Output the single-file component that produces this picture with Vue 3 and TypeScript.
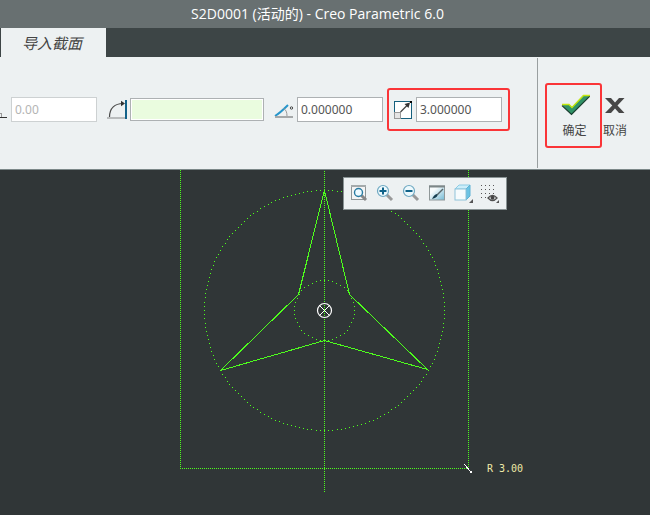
<script setup lang="ts">
import { ref } from 'vue'

interface Dot {
  x: number
  y: number
}

const distance = ref('0.00')
const reference = ref('')
const angle = ref('0.000000')
const scale = ref('3.000000')

const centre: Dot = { x: 324, y: 310 }

// Construction circles are drawn as evenly spaced single dots.
function ring(radius: number, count: number): Dot[] {
  return Array.from({ length: count }, (_, i) => {
    const a = (i * 2 * Math.PI) / count
    return {
      x: Math.round(centre.x + radius * Math.cos(a)),
      y: Math.round(centre.y + radius * Math.sin(a)),
    }
  })
}

const dots: Dot[] = [...ring(120, 180), ...ring(30, 44)]
</script>

<template>
  <div class="app">
    <header class="titlebar">S2D0001 (活动的) - Creo Parametric 6.0</header>

    <nav class="tabs">
      <button class="tab" type="button">导入截面</button>
    </nav>

    <section class="ribbon">
      <div class="fields">
        <label class="field first">
          <svg class="icon narrow" viewBox="0 0 7 19" aria-hidden="true" shape-rendering="crispEdges">
            <path d="M0 13.5H1.5V17" fill="none" stroke="#999" />
            <rect x="0" y="17" width="7" height="1" fill="#333" />
          </svg>
          <input v-model="distance" class="box" type="text" aria-label="距离" disabled />
        </label>

        <label class="field">
          <svg class="icon" viewBox="0 0 19 19" aria-hidden="true">
            <rect x="0" y="17" width="18" height="2" fill="#b9bcbd" />
            <path d="M2.500 17C2.500 8 8 3.500 16 3.500" fill="none" stroke="#4a4a4a" stroke-width="1.200" />
            <path d="M14 .8L18 3.500L14 6.200Z" fill="#333" />
            <rect x="18" y="0" width="2" height="19" fill="#12628a" />
          </svg>
          <input v-model="reference" class="box collector" type="text" aria-label="参考" />
        </label>

        <label class="field">
          <svg class="icon" viewBox="0 0 19 19" aria-hidden="true">
            <path d="M1 16Q6 13 14 5" fill="none" stroke="#2796cb" stroke-width="2" />
            <path d="M9.500 8.500Q13 10 13 16" fill="none" stroke="#999" />
            <rect x="1" y="16" width="18" height="2" fill="#a5a8a9" />
            <circle cx="17.500" cy="8" r="1.200" fill="none" stroke="#444" />
          </svg>
          <input v-model="angle" class="box" type="text" aria-label="角度" />
        </label>

        <label class="field marked">
          <svg class="icon" viewBox="0 0 19 19" aria-hidden="true">
            <rect x="1.500" y="1.500" width="17" height="17" fill="#fff" stroke="#15607e" />
            <rect x="1.500" y="12.500" width="6" height="6" fill="#e5e5e5" stroke="#999" />
            <path d="M7.500 12L16 3.500" stroke="#444" stroke-width="1.200" />
            <path d="M11.500 4L17 2.500L15.500 8Z" fill="#333" />
            <rect x="17" y="1" width="2" height="2" fill="#000" />
          </svg>
          <input v-model="scale" class="box" type="text" aria-label="比例" />
        </label>
      </div>

      <div class="actions">
        <button class="action confirm" type="button">
          <svg width="30" height="22" viewBox="-1 0 30 22" aria-hidden="true">
            <path d="M1 10.500H8L11 13L22 1.500H29L10.500 20.500Z" fill="#309367" />
            <path d="M1 11.500L10.500 20.500L29 2" fill="none" stroke="#173c2d" stroke-width="1.200" />
            <path d="M1 10.500H8L11 13.500L22.500 1.500H29" fill="none" stroke="#c5e80e" stroke-width="1.300" />
          </svg>
          <span>确定</span>
        </button>
        <button class="action cancel" type="button">
          <svg width="22" height="22" viewBox="0 0 22 22" aria-hidden="true">
            <path d="M1 4H7L11 8.500L15 4H20.500L13.500 11.500L20.500 19H15L11 14.500L7 19H1L8.300 11.500Z" fill="#474747" />
          </svg>
          <span>取消</span>
        </button>
      </div>
    </section>

    <main class="canvas">
      <svg class="sketch" viewBox="0 169 650 346" role="img" aria-label="截面草图">
        <g fill="none" stroke="#4dff1c" shape-rendering="crispEdges">
          <path d="M180.500 170V469" stroke-dasharray="1 1" />
          <path d="M468.500 170V469" stroke-dasharray="1 1" />
          <path d="M180 468.500H469" stroke-dasharray="1 1" />
          <path d="M324.500 171V492" stroke-dasharray="1 1" />
          <path d="M324.500 190.500L349.500 294.500L427.500 369.500L324.500 340.500L220.500 370.500L298.500 294.500Z" />
        </g>
        <g fill="#4dff1c" shape-rendering="crispEdges">
          <rect v-for="(dot, i) in dots" :key="i" :x="dot.x" :y="dot.y" width="1" height="1" />
        </g>
        <g fill="none" stroke="#fff">
          <circle cx="324.500" cy="310.500" r="7" stroke-width="1.200" />
          <path d="M319.500 305.500L329.500 315.500M329.500 305.500L319.500 315.500" shape-rendering="crispEdges" />
          <path d="M464 464L471 472" shape-rendering="crispEdges" />
        </g>
        <rect x="470" y="471" width="2" height="2" fill="#fff" />
        <text x="487" y="472" class="dimension">R 3.00</text>
      </svg>

      <div class="viewbar" role="toolbar" aria-label="视图">
        <button type="button" aria-label="重新调整">
          <svg viewBox="0 0 20 20">
            <rect x="2.500" y="2.500" width="14" height="14" fill="#f4f4f4" stroke="#8f9697" />
            <path d="M2 3H17" stroke="#a4aaab" stroke-width="2" />
            <path d="M12.500 12.500L17 17" stroke="#888" stroke-width="3" />
            <circle cx="9.500" cy="9.500" r="4" fill="#eefaff" stroke="#287ba1" stroke-width="1.400" />
          </svg>
        </button>
        <button type="button" aria-label="放大">
          <svg viewBox="0 0 20 20">
            <path d="M11.500 11.500L17 17" stroke="#999" stroke-width="3" />
            <circle cx="8" cy="8" r="5.500" fill="#edf9fd" stroke="#6fa9c2" stroke-width="1.200" />
            <path d="M4.500 8H11.500M8 4.500V11.500" stroke="#0f6289" stroke-width="2" />
          </svg>
        </button>
        <button type="button" aria-label="缩小">
          <svg viewBox="0 0 20 20">
            <path d="M11.500 11.500L17 17" stroke="#999" stroke-width="3" />
            <circle cx="8" cy="8" r="5.500" fill="#edf9fd" stroke="#6fa9c2" stroke-width="1.200" />
            <path d="M4.500 8H11.500" stroke="#0f6289" stroke-width="2" />
          </svg>
        </button>
        <button type="button" aria-label="重画">
          <svg viewBox="0 0 20 20">
            <defs>
              <linearGradient id="sheet" x1="0" y1="0" x2="1" y2="1">
                <stop offset=".3" stop-color="#f7fbfc" />
                <stop offset="1" stop-color="#71b9d4" />
              </linearGradient>
            </defs>
            <rect x="2.500" y="3" width="15" height="14" fill="url(#sheet)" stroke="#909899" />
            <path d="M2 3.500H18" stroke="#7d8788" stroke-width="2" />
            <path d="M16 6L10 12" stroke="#57666b" stroke-width="1.400" />
            <path d="M5 16Q7 11.500 10 11Q12 14 5 16Z" fill="#173f51" />
          </svg>
        </button>
        <button type="button" aria-label="显示样式">
          <svg viewBox="0 0 20 20">
            <path d="M2 6L6 2H17L13 6Z" fill="#cceefa" stroke="#8ccbe4" />
            <path d="M13 6L17 2V13L13 17Z" fill="#6cc3e4" stroke="#5fb2d3" />
            <rect x="2" y="6" width="11" height="11" fill="#f6fbfd" stroke="#8fc4d9" />
            <path d="M20 16V20H16Z" fill="#555" />
          </svg>
        </button>
        <button type="button" aria-label="草绘器显示过滤器">
          <svg viewBox="0 0 20 20">
            <path d="M2 2.500H17M2 6.500H17M2 10.500H17M2 14.500H9" stroke="#555" stroke-dasharray="1 3" shape-rendering="crispEdges" />
            <path d="M9 15Q13.500 10 18 15Q13.500 20 9 15Z" fill="#edf1f2" stroke="#505050" stroke-width="1.300" />
            <circle cx="13.500" cy="14.800" r="2" fill="#444" />
            <path d="M20 17V20H17Z" fill="#555" />
          </svg>
        </button>
      </div>
    </main>
  </div>
</template>

<style>
body {
  margin: 0;
}
</style>

<style scoped>
.app {
  display: flex;
  flex-direction: column;
  min-height: 100vh;
  background: #303637;
  color: #444;
  font-family: "Noto Sans", "Noto Sans CJK SC", sans-serif;
  font-size: 12px;
}

button {
  margin: 0;
  padding: 0;
  border: 0;
  background: none;
  color: inherit;
  font: inherit;
}

.titlebar {
  height: 28px;
  padding-right: 15px;
  background: #687071;
  color: #fff;
  font-family: "Open Sans", "Noto Sans CJK SC", sans-serif;
  font-size: 14px;
  line-height: 28px;
  text-align: center;
}

.tabs {
  display: flex;
  height: 29px;
  padding-left: 1px;
  background: #3d4546;
}

.tab {
  width: 105px;
  padding-right: 3px;
  background: #edf1f2;
  font-size: 15px;
  font-style: italic;
}

.ribbon {
  display: flex;
  justify-content: space-between;
  box-sizing: border-box;
  height: 113px;
  border-bottom: 1px solid #7c8889;
  background: #edf1f2;
}

.fields {
  display: flex;
  align-items: flex-start;
  gap: 4px;
  padding-top: 31px;
}

.field {
  display: flex;
  align-items: center;
  gap: 4px;
  height: 43px;
  padding-right: 6px;
}

.field:nth-child(3) {
  padding-right: 0;
}

.icon {
  width: 19px;
  height: 19px;
  overflow: visible;
}

.icon.narrow {
  width: 7px;
}

.box {
  box-sizing: border-box;
  width: 86px;
  height: 25px;
  padding: 0 3px;
  border: 1px solid #adb1b3;
  border-radius: 0;
  background: #fff;
  color: #555;
  font: inherit;
}

.box:disabled {
  border-color: #cdd1d2;
  color: #b4b4b4;
}

.box.collector {
  width: 134px;
  height: 23px;
  box-shadow: inset 0 0 0 1px #fff;
  background: #eafcdf;
}

.marked {
  box-sizing: border-box;
  padding-left: 4px;
  border: 2px solid #fa3538;
  border-radius: 3px;
}

.actions {
  display: flex;
  align-items: flex-start;
  width: 105px;
  margin: 1px 0;
  padding: 25px 0 0 7px;
  border-left: 1px solid #999fa0;
}

.action {
  display: flex;
  flex-direction: column;
  align-items: center;
  gap: 6px;
  box-sizing: border-box;
  height: 65px;
  padding-top: 9px;
  border: 2px solid transparent;
  line-height: 18px;
}

.confirm {
  width: 57px;
  padding-left: 2px;
  border-color: #fa3538;
  border-radius: 3px;
}

.cancel {
  width: 26px;
  border-width: 2px 0;
  white-space: nowrap;
}

.canvas {
  position: relative;
  flex: 1;
  margin-top: -1px;
}

.sketch {
  display: block;
  width: 100%;
}

.dimension {
  fill: #eeeaa8;
  font-family: "DejaVu Sans Mono", monospace;
  font-size: 10px;
}

.viewbar {
  position: absolute;
  top: 8px;
  left: 343px;
  display: flex;
  align-items: center;
  gap: 6px;
  box-sizing: border-box;
  height: 33px;
  padding: 0 7px 1px 5px;
  border: 1px solid #899394;
  background: #edf1f2;
}

.viewbar button {
  width: 20px;
  height: 20px;
}

.viewbar svg {
  display: block;
  width: 20px;
  height: 20px;
  overflow: visible;
}
</style>
